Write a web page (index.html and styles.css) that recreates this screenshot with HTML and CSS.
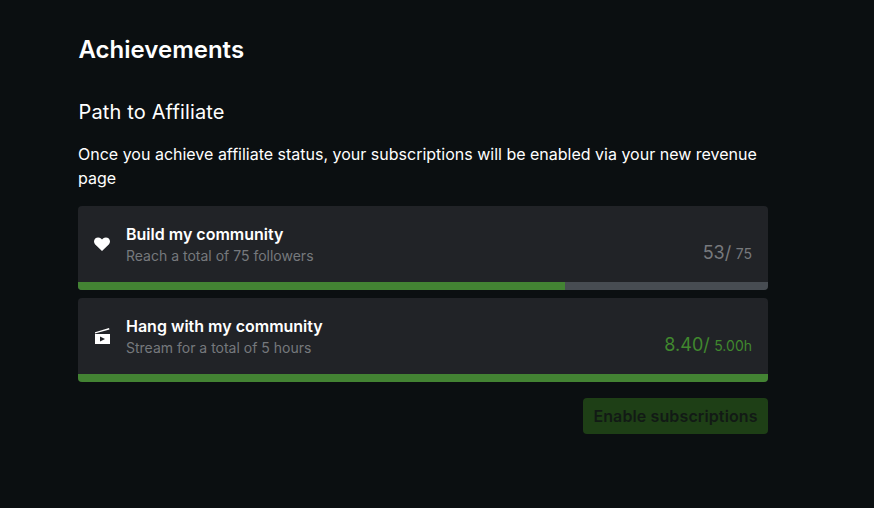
FILE: index.html
```html
<!DOCTYPE html>
<html lang="en">
<head>
<meta charset="utf-8">
<title>Achievements</title>
<link rel="stylesheet" href="styles.css">
</head>
<body>
<main class="page">
  <h1 class="title">Achievements</h1>
  <h2 class="subtitle">Path to Affiliate</h2>
  <p class="intro">Once you achieve affiliate status, your subscriptions will be enabled via your new revenue page</p>
  <section class="card">
    <div class="card-body">
      <svg class="icon" viewBox="0 0 16 14" width="16" height="14" aria-hidden="true"><path d="M8 14 L1.2 7.6 C-0.4 6 -0.4 3.2 1.2 1.6 C2.8 0 5.4 0 7 1.6 L8 2.6 L9 1.6 C10.6 0 13.2 0 14.8 1.6 C16.4 3.2 16.4 6 14.8 7.6 Z" fill="#fff"/></svg>
      <div class="text">
        <div class="name">Build my community</div>
        <div class="desc">Reach a total of 75 followers</div>
      </div>
      <div class="count"><span class="big">53/</span> <span class="small">75</span></div>
    </div>
    <div class="track"><div class="fill" style="width:70.6%"></div></div>
  </section>
  <section class="card">
    <div class="card-body">
      <svg class="icon" viewBox="0 0 16 16" width="16" height="16" aria-hidden="true"><path d="M1 6 H16 V16 H1 Z M6 8.5 V13.5 L11 11 Z" fill="#fff" fill-rule="evenodd"/><path d="M1 4.2 L15 0 L15.5 1.5 L1 5.6 Z" fill="#fff"/></svg>
      <div class="text">
        <div class="name">Hang with my community</div>
        <div class="desc">Stream for a total of 5 hours</div>
      </div>
      <div class="count done"><span class="big">8.40/</span> <span class="small">5.00h</span></div>
    </div>
    <div class="track"><div class="fill" style="width:100%"></div></div>
  </section>
  <div class="actions"><button class="enable" type="button" disabled>Enable subscriptions</button></div>
</main>
</body>
</html>
```
FILE: styles.css
```css
* { box-sizing: border-box; }
html, body { height: 100%; }
body {
  margin: 0;
  background: #0b0f11;
  color: #fff;
  font-family: Inter, "Liberation Sans", sans-serif;
}
.page { width: 690px; margin-left: 78px; padding-top: 35px; }
.title { margin: 0; font-size: 24px; line-height: 30px; font-weight: 600; padding-left: 0.5px; }
.subtitle { margin: 32px 0 0; font-size: 20px; line-height: 30px; font-weight: 400; letter-spacing: 0.15px; padding-left: 0.5px; }
.intro { margin: 15px 0 0; font-size: 16px; line-height: 24px; }
.card {
  margin-top: 8px;
  height: 84px;
  background: #212327;
  border-radius: 4px;
  overflow: hidden;
  display: flex;
  flex-direction: column;
}
.intro + .card { margin-top: 16px; }
.card-body { flex: 1; display: flex; align-items: center; padding: 0 16px; }
.icon { flex: none; margin-right: 16px; }
.text { flex: 1; }
.name { font-size: 16px; line-height: 24px; font-weight: 600; }
.desc { font-size: 14px; line-height: 20px; color: #76797d; }
.count { align-self: flex-end; padding-bottom: 16px; color: #77797d; line-height: 24px; }
.count.done { color: #40882e; }
.big { font-size: 18px; }
.small { font-size: 14px; }
.track { height: 8px; background: #474c52; }
.fill { height: 100%; background: #438333; }
.actions { display: flex; justify-content: flex-end; margin-top: 16px; }
.enable {
  height: 36px;
  width: 185px;
  padding: 0;
  border: 0;
  border-radius: 4px;
  background: #1e3f16;
  color: #121a15;
  font: 600 16px/24px Inter, "Liberation Sans", sans-serif;
  letter-spacing: 0.12px;
}
```
